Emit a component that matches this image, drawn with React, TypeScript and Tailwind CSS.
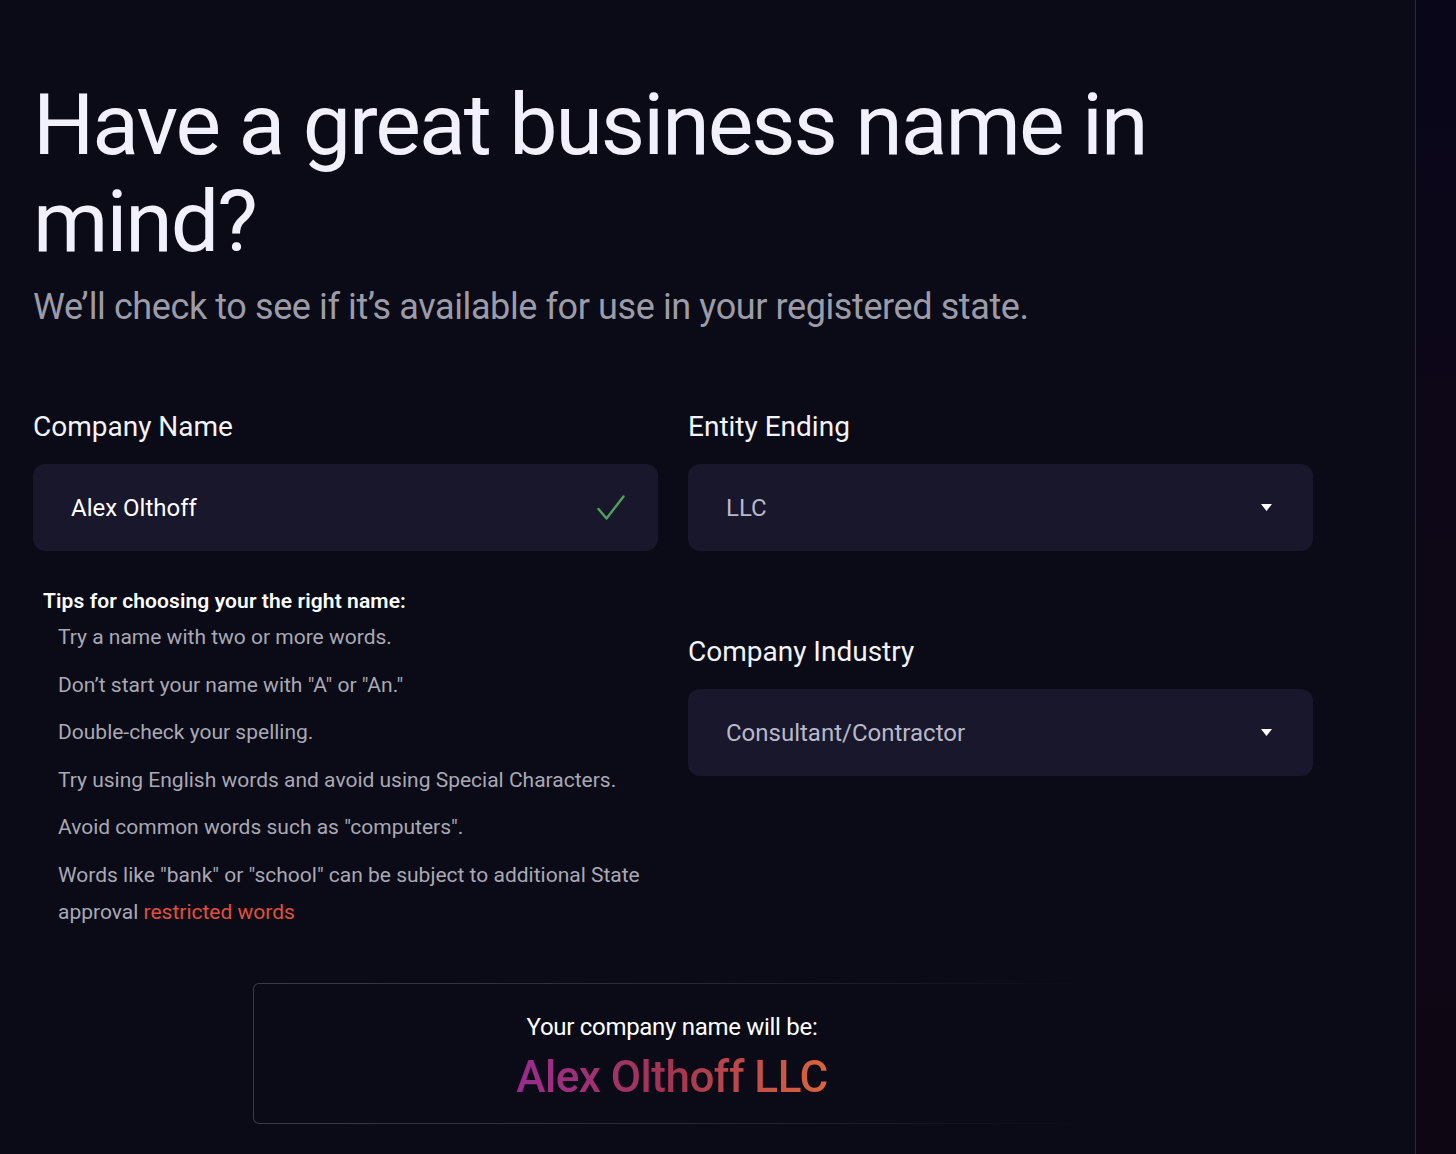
import React from "react";

const tips = [
  "Try a name with two or more words.",
  "Don’t start your name with \"A\" or \"An.\"",
  "Double-check your spelling.",
  "Try using English words and avoid using Special Characters.",
  "Avoid common words such as \"computers\".",
];

function Caret() {
  return (
    <svg width="11" height="7" viewBox="0 0 11 7" className="shrink-0">
      <path d="M0 0 L11 0 L5.5 7 Z" fill="#ffffff" />
    </svg>
  );
}

function SelectBox({ value }: { value: string }) {
  return (
    <div className="flex h-[87px] items-center justify-between rounded-[12px] bg-[#18172b] pl-[38px] pr-[41px]">
      <span className="text-[24px] text-[#b9b8c8]">{value}</span>
      <Caret />
    </div>
  );
}

export default function App() {
  return (
    <div
      className="flex min-h-[1154px] w-full bg-[#0a0b16] text-white"
      style={{ fontFamily: "Roboto, 'Liberation Sans', sans-serif" }}
    >
      <main className="w-[1415px] shrink-0 pl-[33px] pt-[76px]">
        <h1 className="text-[86px] font-normal leading-[97px] tracking-[-2px] text-[#f1f0fb]">
          Have a great business name in
          <br />
          mind?
        </h1>
        <p className="mt-[13px] text-[36px] leading-[48px] tracking-[-0.4px] text-[#9c9ba8]">
          We’ll check to see if it’s available for use in your registered state.
        </p>

        <div className="mt-[78px] flex gap-[30px]">
          <div className="w-[625px]">
            <div className="text-[28px] leading-[36px] text-[#f3f3f8]">Company Name</div>
            <div className="mt-[19px] flex h-[87px] items-center justify-between rounded-[12px] bg-[#18172b] pl-[38px] pr-[33px]">
              <span className="text-[24px] text-white">Alex Olthoff</span>
              <svg width="28" height="26" viewBox="0 0 28 26" fill="none">
                <path d="M1.5 14 L9.5 23.5 L26.5 1.5" stroke="#4ea35a" strokeWidth="2.4" strokeLinecap="round" strokeLinejoin="round" />
              </svg>
            </div>
            <div className="mt-[36px] pl-[10px]">
              <div className="text-[21px] font-semibold leading-[28px] tracking-[0.1px] text-white">
                Tips for choosing your the right name:
              </div>
              <ul className="mt-[4px] pl-[15px] text-[21px] leading-[37px] text-[#a9a8b4]">
                {tips.map((t) => (
                  <li key={t} className="mb-[10.5px]">{t}</li>
                ))}
                <li>
                  <span>Words like "bank" or "school" can be subject to additional State</span>
                  <br />
                  <span>approval </span>
                  <span className="text-[#e0503d]">restricted words</span>
                </li>
              </ul>
            </div>
          </div>

          <div className="w-[625px]">
            <div className="text-[28px] leading-[36px] text-[#f3f3f8]">Entity Ending</div>
            <div className="mt-[19px]">
              <SelectBox value="LLC" />
            </div>
            <div className="mt-[83px] text-[28px] leading-[36px] text-[#f3f3f8]">Company Industry</div>
            <div className="mt-[19px]">
              <SelectBox value="Consultant/Contractor" />
            </div>
          </div>
        </div>

        <div className="ml-[220px] mt-[52px] w-[838px] rounded-[6px] bg-gradient-to-r from-[#3a3a44] via-[#2a2a33] to-[#0a0b16] p-px">
          <div className="flex h-[139px] flex-col items-center rounded-[5px] bg-[#0a0b16] pt-[27px]">
            <div className="text-[24px] leading-[32px] text-white tracking-[-0.3px]">Your company name will be:</div>
            <div className="mt-[8px] bg-gradient-to-r from-[#9a2a8e] via-[#a53450] to-[#dc653a] bg-clip-text text-[44px] font-medium leading-[52px] tracking-[-0.5px] text-transparent">
              Alex Olthoff LLC
            </div>
          </div>
        </div>
      </main>
      <div className="w-px shrink-0 bg-[#2a2a36]" />
      <div className="flex-1 bg-gradient-to-b from-[#09061a] via-[#0e0716] to-[#0f0613]" />
    </div>
  );
}
